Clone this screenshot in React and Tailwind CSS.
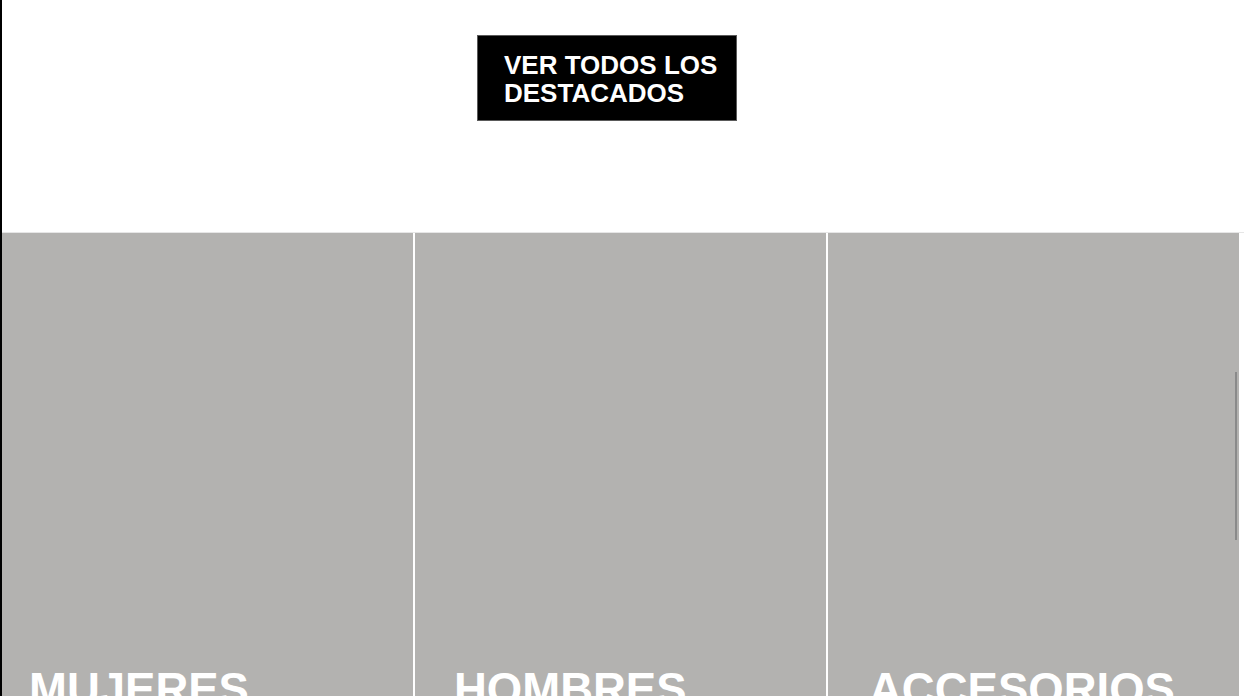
import React from 'react';

const categories = [
  { name: 'MUJERES', pad: 'pl-[27px]' },
  { name: 'HOMBRES', pad: 'pl-[39px]' },
  { name: 'ACCESORIOS', pad: 'pl-[41px]' },
];

const App = () => {
  return (
    <div
      className="h-[696px] w-[1244px] overflow-hidden bg-white border-l-2 border-black relative"
      style={{ fontFamily: '"Liberation Sans", Arial, sans-serif' }}
    >
      {/* Featured CTA */}
      <div className="h-[232px] pt-[35px] pl-[475px]">
        <a
          href="#"
          className="block w-[260px] bg-black border border-[#5a5a5a] text-white font-bold text-[26px] leading-[28px] pl-[26px] pt-[15px] pb-[13px]"
        >
          VER TODOS LOS
          <br />
          DESTACADOS
        </a>
      </div>

      <div className="h-px bg-[#e6e6e6]" />

      {/* Category tiles */}
      <div className="flex gap-[2px] relative">
        {categories.map((c) => (
          <div
            key={c.name}
            className={`w-[411px] h-[520px] shrink-0 bg-[#b3b2b0] flex flex-col justify-start pt-[431px] ${c.pad}`}
          >
            <h2 className="text-white font-bold text-[45.5px] leading-[52px]">{c.name}</h2>
          </div>
        ))}
        <div className="absolute left-[1233px] top-[139px] w-[2px] h-[168px] bg-[#8a8a8a]" />
      </div>
    </div>
  );
};

export default App;
